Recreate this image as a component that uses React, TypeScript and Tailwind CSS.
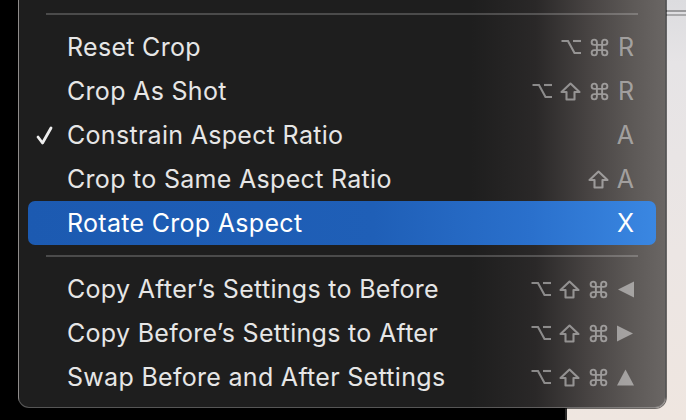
import React from "react";
import { Command } from "lucide-react";

const Opt = () => (
  <svg width="20" height="16" viewBox="0 0 20 16" fill="none" stroke="currentColor" strokeWidth="2.1">
    <path d="M0.5 2 H7 L13.5 14 H20" />
    <path d="M12 2 H20" />
  </svg>
);

const Shift = () => (
  <svg width="21" height="19" viewBox="0 0 21 19" fill="none" stroke="currentColor" strokeWidth="2.1" strokeLinejoin="round">
    <polygon points="10.5,1.5 19.5,10 14.5,10 14.5,17.5 6.5,17.5 6.5,10 1.5,10" />
  </svg>
);

const Cmd = () => <Command size={21} strokeWidth={2.2} />;

const TriLeft = () => (
  <svg width="17" height="17" viewBox="0 0 17 17" fill="currentColor">
    <polygon points="17,0.5 17,16.5 1,8.5" />
  </svg>
);
const TriRight = () => (
  <svg width="17" height="17" viewBox="0 0 17 17" fill="currentColor">
    <polygon points="0,0.5 0,16.5 16,8.5" />
  </svg>
);
const TriUp = () => (
  <svg width="17" height="17" viewBox="0 0 17 17" fill="currentColor">
    <polygon points="8.5,0.5 17,16.5 0,16.5" />
  </svg>
);

const Check = () => (
  <svg width="17" height="19" viewBox="0 0 17 19" fill="none" stroke="currentColor" strokeWidth="2.8" strokeLinecap="round" strokeLinejoin="round">
    <polyline points="2,11 6.5,17 15,2" />
  </svg>
);

type Key = string;

const renderKey = (k: Key, i: number) => {
  switch (k) {
    case "opt":
      return <Opt key={i} />;
    case "shift":
      return <Shift key={i} />;
    case "cmd":
      return <Cmd key={i} />;
    case "left":
      return <TriLeft key={i} />;
    case "right":
      return <TriRight key={i} />;
    case "up":
      return <TriUp key={i} />;
    default:
      return (
        <span key={i} className="leading-none">
          {k}
        </span>
      );
  }
};

type Item = { label: string; keys: Key[]; checked?: boolean; active?: boolean };

const group1: Item[] = [
  { label: "Reset Crop", keys: ["opt", "cmd", "R"] },
  { label: "Crop As Shot", keys: ["opt", "shift", "cmd", "R"] },
  { label: "Constrain Aspect Ratio", keys: ["A"], checked: true },
  { label: "Crop to Same Aspect Ratio", keys: ["shift", "A"] },
  { label: "Rotate Crop Aspect", keys: ["X"], active: true },
];

const group2: Item[] = [
  { label: "Copy After\u2019s Settings to Before", keys: ["opt", "shift", "cmd", "left"] },
  { label: "Copy Before\u2019s Settings to After", keys: ["opt", "shift", "cmd", "right"] },
  { label: "Swap Before and After Settings", keys: ["opt", "shift", "cmd", "up"] },
];

const Row = ({ item }: { item: Item }) => (
  <div
    className={
      item.active
        ? "flex h-[44px] items-center rounded-[7px] bg-[linear-gradient(to_right,#1c5ab1_0%,#1f5fb7_55%,#2a70cc_80%,#3a87e2_100%)] pl-[8px] pr-[22px] text-white"
        : "flex h-[44px] items-center pl-[8px] pr-[22px] text-[#e6e6e6]"
    }
  >
    <div className="flex w-[31px] items-center text-[#eeeeee]">{item.checked && <Check />}</div>
    <span className="flex-1 text-[25px] leading-none tracking-[0.3px]">{item.label}</span>
    <div
      className={
        item.active
          ? "flex items-center gap-[8px] text-[25px] text-white"
          : "flex items-center gap-[8px] text-[25px] text-white/45"
      }
    >
      {item.keys.map((k, i) => renderKey(k, i))}
    </div>
  </div>
);

const Sep = () => (
  <div className="flex h-[22px] items-center px-[18px]">
    <div className="h-[1.5px] w-full bg-white/20" />
  </div>
);

export default function App() {
  return (
    <div
      className="relative h-[420px] w-[686px] overflow-hidden bg-black"
      style={{ fontFamily: "Inter, 'Noto Sans', sans-serif" }}
    >
      {/* underlying window on the right */}
      <div className="absolute bottom-0 left-[565px] right-0 top-0 flex flex-col gap-[2.5px] border-l-2 border-[#2a2a2a] bg-[linear-gradient(to_bottom,#dcdcdf_0%,#e6e4e6_15%,#ece6e4_60%,#efe6e0_100%)] pt-[10px]">
        <div className="h-[1.5px] bg-[#9a9a9c]" />
        <div className="h-[1.5px] bg-[#a8a8aa]" />
      </div>

      {/* menu */}
      <div className="absolute left-[18px] top-[-20px] w-[648px] rounded-[11px] border border-white/25 bg-[linear-gradient(to_right,#1e1e1e_0%,#1e1e1e_70%,#2a2828_80%,#474342_88%,#5d5957_95%,#6a6664_100%)] px-[9px] pb-[8px] pt-[22px] shadow-[0_0_0_1px_rgba(0,0,0,0.55)]">
        <Sep />
        {group1.map((it) => (
          <Row key={it.label} item={it} />
        ))}
        <Sep />
        {group2.map((it) => (
          <Row key={it.label} item={it} />
        ))}
      </div>
    </div>
  );
}
